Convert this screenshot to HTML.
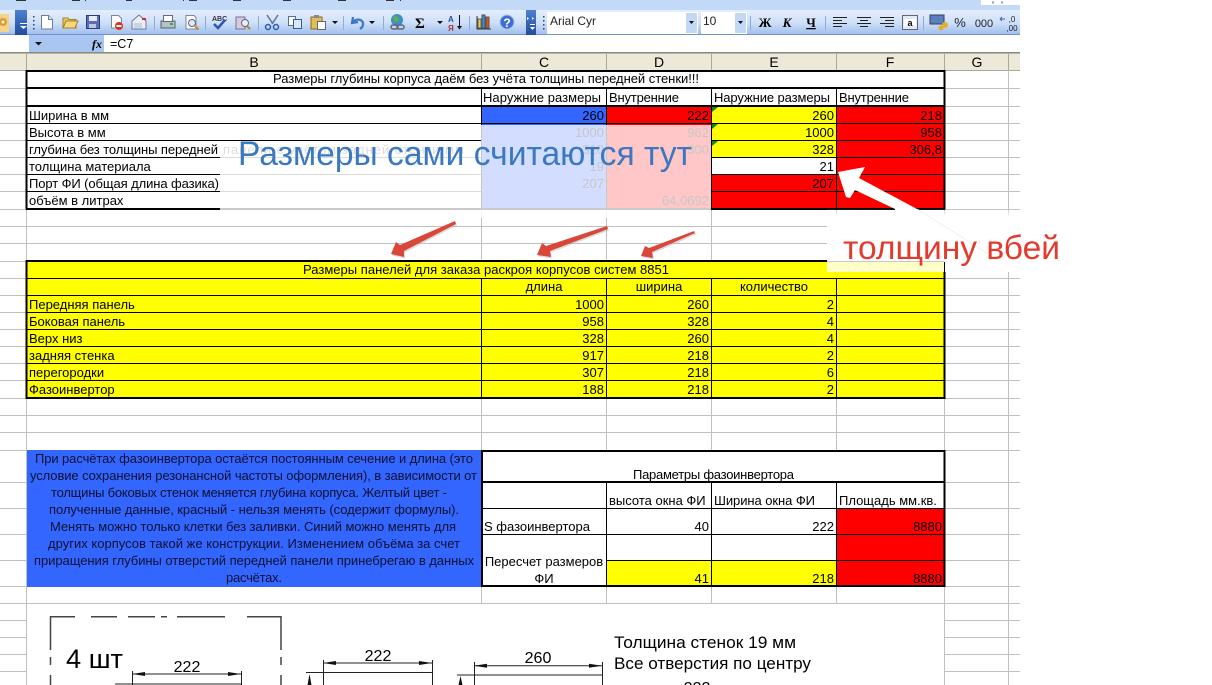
<!DOCTYPE html>
<html lang="ru"><head><meta charset="utf-8"><title>Excel</title>
<style>
html,body{margin:0;padding:0;background:#fff;width:1212px;height:685px;overflow:hidden}
svg{display:block;position:absolute;left:0;top:0}
text{font-family:"Liberation Sans",sans-serif;font-size:13px;fill:#000}
.r{text-anchor:end}.c{text-anchor:middle}
.g{stroke:#c0c0c0;stroke-width:1;shape-rendering:crispEdges}
.k{stroke:#000;stroke-width:1;shape-rendering:crispEdges}
.K{stroke:#000;stroke-width:2;shape-rendering:crispEdges}
.d{stroke:#222;stroke-width:1;fill:none}
.h{font-size:14px}
</style></head><body>
<svg width="1212" height="685" viewBox="0 0 1212 685" xmlns="http://www.w3.org/2000/svg">
<defs>
<linearGradient id="tb" x1="0" y1="0" x2="0" y2="1"><stop offset="0" stop-color="#e4eefc"/><stop offset=".5" stop-color="#cfe0f8"/><stop offset="1" stop-color="#9dbcec"/></linearGradient>
<linearGradient id="gr" x1="0" y1="0" x2="0" y2="1"><stop offset="0" stop-color="#4f7fd0"/><stop offset="1" stop-color="#1f4c9c"/></linearGradient>
<linearGradient id="fade" x1="0" y1="0" x2="0" y2="1"><stop offset="0" stop-color="#fff" stop-opacity="0"/><stop offset=".4" stop-color="#fff" stop-opacity="1"/></linearGradient>
<filter id="s" x="-20%" y="-20%" width="140%" height="140%"><feGaussianBlur stdDeviation=".35"/></filter>
</defs>

<!-- chrome -->
<rect x="0" y="0" width="1020" height="10" fill="#c3d9f8"/>
<rect x="981" y="0" width="39" height="5" fill="#fff"/>
<g stroke="#333" stroke-width="1" fill="none" shape-rendering="crispEdges">
<path d="M16 .5h10M72 .5h8M85 .5h1M126 .5h6M183 .5h1M189 .5h8M233 .5h8M283 .5h8M338 .5h8M386 .5h8M400 .5h1"/>
<path d="M993 1.500v2M1002 1.500v2"/>
</g>
<rect x="0" y="10" width="1020" height="25" fill="url(#tb)"/>
<rect x="0" y="34" width="1020" height="1" fill="#6f93d2"/>
<rect x="15" y="10" width="12" height="25" fill="url(#gr)"/>
<rect x="526" y="10" width="10" height="25" fill="url(#gr)"/>
<path d="M20 26h7l-3.500 3z M20 23h7v1h-7z M530 27h5l-2.500 3z M530 24h5v1h-5z" fill="#fff"/>
<path d="M527 17l2 1.500-2 1.500zM532 17l2 1.500-2 1.500z" fill="#fff"/>
<rect x="0" y="14" width="9" height="18" fill="#f2d38a"/>
<circle cx="3" cy="22" r="4" fill="#e39a2c"/><circle cx="3" cy="22" r="1.500" fill="#fff"/>
<path d="M33 16h1.500v1.500H33zM33 20h1.500v1.500H33zM33 24h1.500v1.500H33zM33 28h1.500v1.500H33z M543 16h1.500v1.500H543zM543 20h1.500v1.500H543zM543 24h1.500v1.500H543zM543 28h1.500v1.500H543z" fill="#224488"/>

<!-- icons -->
<path d="M41.500 15.500h7l4 4v9.500h-11z" fill="#fff" stroke="#6b7c99"/><path d="M48.500 15.500v4h4" fill="#dde6f3" stroke="#6b7c99"/>
<path d="M63 28v-10h5l1 1.500h7v8.500z" fill="#e8c760" stroke="#a5811f"/><path d="M63 28l3-7h12l-3 7z" fill="#f4d67c" stroke="#a5811f"/>
<rect x="86.500" y="15.500" width="13" height="13" fill="#5a6db9" stroke="#2b3a86"/><rect x="89" y="16" width="8" height="5" fill="#e9edf7"/><rect x="89" y="24" width="7" height="4" fill="#bcc6de"/>
<path d="M111.500 15.500h7l3 3v9.500h-10z" fill="#fff" stroke="#7a879e"/><circle cx="119" cy="26" r="4" fill="#d8321e"/><rect x="116.500" y="25" width="5" height="2" fill="#fff"/>
<path d="M132 21l7-6 7 6v8h-14z" fill="#e9edf4" stroke="#6b7c99"/><rect x="134" y="23" width="8" height="5" fill="#c8d3e6"/><rect x="142" y="18" width="4" height="2" fill="#d23"/>
<rect x="161" y="21" width="14" height="7" fill="#b8bfcc" stroke="#566"/><rect x="163.500" y="15.500" width="9" height="6" fill="#fff" stroke="#667"/><rect x="170" y="23" width="3" height="2" fill="#2fb04a"/>
<path d="M186 15.500h8l2 2v11.500h-10z" fill="#fff" stroke="#7a879e"/><circle cx="192" cy="23" r="3.500" fill="#dfeafa" stroke="#667"/><path d="M195 26l3.500 3.500" stroke="#c9882a" stroke-width="2"/>
<text x="212" y="21" style="font-size:7px;font-weight:bold;fill:#334">ABC</text><path d="M214 24l4 4 7-8" fill="none" stroke="#2a58b8" stroke-width="2.500"/>
<rect x="236" y="17" width="9" height="12" fill="#d8c9e0" stroke="#7d6f99"/><circle cx="245" cy="23" r="3.500" fill="#e5f0fb" stroke="#667"/><path d="M247 26l3 3" stroke="#b8861e" stroke-width="2"/>
<path d="M267 15l6 9M278 15l-6 9" stroke="#66738c" stroke-width="1.500"/><circle cx="268" cy="27" r="2.500" fill="none" stroke="#2e5db0" stroke-width="1.500"/><circle cx="276" cy="27" r="2.500" fill="none" stroke="#2e5db0" stroke-width="1.500"/>
<rect x="288.500" y="16.500" width="7" height="9" fill="#fff" stroke="#54709f"/><rect x="293.500" y="19.500" width="8" height="9" fill="#dce8f8" stroke="#2f5ea8"/>
<rect x="311" y="17" width="11" height="12" fill="#e3bd58" stroke="#8a6b1e"/><rect x="314" y="15" width="5" height="3" fill="#888"/><rect x="317.500" y="21.500" width="8" height="8" fill="#fff" stroke="#667"/>
<path d="M332 21h6l-3 3z M369 21h6l-3 3z M437 21h6l-3 3z" fill="#111"/>
<path d="M353 17l-1 6 6-1M353 22c3-4 11-3 10 3-.4 2-1.500 3-3 4" fill="none" stroke="#3f73c8" stroke-width="2.200"/>
<circle cx="397" cy="20" r="6" fill="#3f8fc8"/><path d="M393 17c3-2 5 0 6 2l-2 3-3-1z" fill="#5fb04a"/><rect x="391" y="25" width="7" height="4" rx="2" fill="none" stroke="#667" stroke-width="1.500"/><rect x="397" y="25" width="7" height="4" rx="2" fill="none" stroke="#667" stroke-width="1.500"/>
<text x="415" y="28" style="font-size:15px;font-weight:bold;font-family:'Liberation Serif',serif">Σ</text>
<text x="448" y="22" style="font-size:8px;font-weight:bold;fill:#2c4f9c">A</text><text x="448" y="31" style="font-size:8px;font-weight:bold;fill:#a33">Я</text><path d="M459.500 15v13" stroke="#111"/><path d="M457 26h5l-2.500 3.500z" fill="#111"/>
<rect x="478" y="19" width="3" height="9" fill="#e5cf50" stroke="#665"/><rect x="482" y="15" width="3" height="13" fill="#4a88cf" stroke="#456"/><rect x="486" y="17" width="3" height="11" fill="#d3522a" stroke="#654"/><path d="M477 16v13h14" fill="none" stroke="#333"/>
<circle cx="507" cy="22" r="7" fill="#3c6fd0" stroke="#a7c0ea"/><text x="507" y="27" class="c" style="font-size:12px;font-weight:bold;fill:#fff">?</text>
<g stroke="#8fabd8"><path d="M154.500 16v14M205.500 16v14M258.500 16v14M343.500 16v14M383.500 16v14M469.500 16v14M750.500 16v14M825.500 16v14M923.500 16v14"/></g>

<rect x="547" y="12" width="151" height="22" fill="#fff"/><rect x="686" y="13" width="11" height="20" fill="#c3d8f6"/>
<rect x="701" y="12" width="46" height="22" fill="#fff"/><rect x="735" y="13" width="11" height="20" fill="#c3d8f6"/>
<path d="M689 21h5l-2.500 3zM738 21h5l-2.500 3z" fill="#111"/>
<text x="550" y="25" style="font-size:12px;fill:#222">Arial Cyr</text><text x="703" y="25" style="font-size:12px;fill:#222">10</text>
<text x="765" y="27" class="c" style="font-size:13px;font-weight:bold;font-family:'Liberation Serif',serif">Ж</text>
<text x="787" y="27" class="c" style="font-size:13px;font-weight:bold;font-style:italic;font-family:'Liberation Serif',serif">К</text>
<text x="811" y="27" class="c" style="font-size:13px;font-weight:bold;font-family:'Liberation Serif',serif;text-decoration:underline">Ч</text>
<g stroke="#222" shape-rendering="crispEdges">
<path d="M833 17.500h14M833 20.500h9M833 23.500h14M833 26.500h9M857 17.500h14M860 20.500h8M857 23.500h14M860 26.500h8M880 17.500h14M885 20.500h9M880 23.500h14M885 26.500h9"/></g>
<rect x="902.500" y="15.500" width="15" height="14" fill="#e2eaf6" stroke="#667"/><rect x="904" y="19" width="12" height="7" fill="#fff"/><text x="910" y="26" class="c" style="font-size:9px;font-weight:bold">a</text>
<rect x="930" y="15" width="14" height="9" fill="#5a80c0" stroke="#345"/><circle cx="945" cy="25" r="3" fill="#e0b030"/><circle cx="941" cy="28" r="2.500" fill="#e0b030"/>
<text x="960" y="27" class="c" style="font-size:13px;fill:#223">%</text><text x="984" y="27" class="c" style="font-size:11px;fill:#223">000</text>
<text x="1012" y="22" class="c" style="font-size:8px;fill:#223">,0</text><text x="1012" y="31" class="c" style="font-size:8px;fill:#223">,00</text><path d="M1000 19h5M1000 19l2-2M1000 19l2 2" stroke="#3a6cc0" fill="none"/>

<!-- formula bar -->
<rect x="0" y="35" width="1020" height="17" fill="#fff"/>
<rect x="29" y="35" width="75" height="17" fill="#a9c5f2"/>
<path d="M35 42h7l-3.500 3.500z" fill="#111"/>
<text x="92" y="48" style="font-size:12px;font-style:italic;font-weight:bold;font-family:'Liberation Serif',serif">fx</text>
<text x="110" y="48" style="font-size:12.500px">=C7</text>

<!-- headers -->
<rect x="0" y="52" width="1020" height="18" fill="#ece9d8"/>
<rect x="0" y="52" width="1020" height="1" fill="#8a8a80"/>
<rect x="0" y="53" width="1020" height="1" fill="#b8b5a5"/>
<rect x="0" y="70" width="1020" height="1" fill="#aca899"/>
<g stroke="#aca899" shape-rendering="crispEdges"><path d="M26.500 54v16M481.500 54v16M606.500 54v16M711.500 54v16M836.500 54v16M944.500 54v16M1008.500 54v16"/></g>
<text x="254" y="67" class="c h">B</text><text x="544" y="67" class="c h">C</text><text x="659" y="67" class="c h">D</text><text x="774" y="67" class="c h">E</text><text x="890" y="67" class="c h">F</text><text x="977" y="67" class="c h">G</text>

<!-- grid -->
<g class="g">
<path d="M0 88.500H1020M0 106.500H1020M0 123.500H1020M0 140.500H1020M0 157.500H1020M0 174.500H1020M0 191.500H1020M0 209.500H1020M0 226.500H1020M0 243.500H1020M0 261.500H1020M0 278.500H1020M0 295.500H1020M0 312.500H1020M0 329.500H1020M0 346.500H1020M0 363.500H1020M0 380.500H1020M0 398.500H1020M0 415.500H1020M0 432.500H1020M0 450.500H1020M0 482.500H1020M0 508.500H1020M0 534.500H1020M0 560.500H1020M0 586.500H1020M0 603.500H1020M0 620.500H1020M0 637.500H1020M0 654.500H1020M0 671.500H1020"/>
<path d="M26.500 70V685M481.500 70V603M606.500 70V603M711.500 70V603M836.500 70V603M944.500 70V685M1008.500 70V685"/>
</g>
<rect x="27" y="604" width="917" height="81" fill="#fff"/>

<!-- table 1 -->
<rect x="27" y="70" width="917" height="139" fill="#fff"/>
<rect x="481" y="106" width="125" height="18" fill="#3366ff"/>
<rect x="606" y="106" width="105" height="18" fill="#ff0000"/>
<rect x="711" y="106" width="125" height="51" fill="#ffff00"/>
<rect x="836" y="106" width="108" height="103" fill="#ff0000"/>
<rect x="711" y="174" width="125" height="35" fill="#ff0000"/>
<rect x="481" y="124" width="125" height="85" fill="#3366ff"/>
<rect x="606" y="124" width="105" height="85" fill="#ff0000"/>
<path d="M712 107h6l-6 5zM712 124h6l-6 5zM712 141h6l-6 5z" fill="#0a8a20"/>
<g class="k"><path d="M27 123.500H944M27 140.500H481M711 140.500H944M27 157.500H481M711 157.500H944M27 174.500H481M711 174.500H944M27 191.500H481M711 191.500H944"/>
<path d="M481.500 88V209M606.500 88V209M711.500 88V209M836.500 88V209"/></g>
<g class="K"><path d="M26 71H945M26 88H945M26 106H945M26 209H945M26.500 70V209.500M944.500 70V209.500"/></g>

<text x="486" y="83" class="c" textLength="426" lengthAdjust="spacing">Размеры глубины корпуса даём без учёта толщины передней стенки!!!</text>
<text x="483" y="102" textLength="118">Наружние размеры</text><text x="609" y="102" textLength="70">Внутренние</text><text x="714" y="102" textLength="116">Наружние размеры</text><text x="839" y="102" textLength="70">Внутренние</text>
<text x="29" y="120">Ширина в мм</text><text x="29" y="137">Высота в мм</text><text x="29" y="154" textLength="189">глубина без толщины передней</text><text x="223" y="154" textLength="241">панели с учётом задней стенки мм</text><text x="29" y="171">толщина материала</text><text x="29" y="188" textLength="190">Порт ФИ (общая длина фазика)</text><text x="29" y="205">объём в литрах</text>
<text x="604" y="120" class="r">260</text><text x="709" y="120" class="r">222</text><text x="834" y="120" class="r">260</text><text x="942" y="120" class="r">218</text>
<text x="604" y="137" class="r">1000</text><text x="709" y="137" class="r">962</text><text x="834" y="137" class="r">1000</text><text x="942" y="137" class="r">958</text>
<text x="604" y="154" class="r">310</text><text x="709" y="154" class="r">300</text><text x="834" y="154" class="r">328</text><text x="942" y="154" class="r">306,8</text>
<text x="604" y="171" class="r">19</text><text x="834" y="171" class="r">21</text>
<text x="604" y="188" class="r">207</text><text x="834" y="188" class="r">207</text>
<text x="709" y="205" class="r">64,0692</text>

<!-- overlay -->
<rect x="220" y="141" width="261" height="68" fill="#fff" fill-opacity=".86"/>
<rect x="481" y="125" width="230" height="84" fill="#fff" fill-opacity=".78"/>
<rect x="220" y="208" width="491" height="2" fill="#cacaca"/>
<rect x="220" y="210" width="491" height="8" fill="#fff" fill-opacity=".8"/>
<text x="238" y="165" style="font-size:34px;fill:#3a78c0" textLength="454" lengthAdjust="spacingAndGlyphs">Размеры сами считаются тут</text>

<!-- table 2 -->
<rect x="27" y="261" width="917" height="137" fill="#ffff00"/>
<g class="k"><path d="M27 278.500H944M27 295.500H944M27 312.500H944M27 329.500H944M27 346.500H944M27 363.500H944M27 380.500H944"/>
<path d="M481.500 278V398M606.500 278V398M711.500 278V398M836.500 278V398"/></g>
<g class="K"><path d="M26 261H945M26 398H945M26.500 260V399M944.500 260V399"/></g>
<text x="486" y="274" class="c" textLength="366" lengthAdjust="spacing">Размеры панелей для заказа раскроя корпусов систем 8851</text>
<text x="544" y="291" class="c">длина</text><text x="659" y="291" class="c">ширина</text><text x="774" y="291" class="c">количество</text>
<text x="29" y="309">Передняя панель</text><text x="604" y="309" class="r">1000</text><text x="709" y="309" class="r">260</text><text x="834" y="309" class="r">2</text>
<text x="29" y="326">Боковая панель</text><text x="604" y="326" class="r">958</text><text x="709" y="326" class="r">328</text><text x="834" y="326" class="r">4</text>
<text x="29" y="343">Верх низ</text><text x="604" y="343" class="r">328</text><text x="709" y="343" class="r">260</text><text x="834" y="343" class="r">4</text>
<text x="29" y="360">задняя стенка</text><text x="604" y="360" class="r">917</text><text x="709" y="360" class="r">218</text><text x="834" y="360" class="r">2</text>
<text x="29" y="377">перегородки</text><text x="604" y="377" class="r">307</text><text x="709" y="377" class="r">218</text><text x="834" y="377" class="r">6</text>
<text x="29" y="394">Фазоинвертор</text><text x="604" y="394" class="r">188</text><text x="709" y="394" class="r">218</text><text x="834" y="394" class="r">2</text>

<!-- white arrow + label -->
<rect x="827" y="209" width="193" height="18" fill="url(#fade)"/>
<rect x="827" y="216" width="193" height="46" fill="#fff"/>
<rect x="827" y="262" width="117" height="10" fill="#ffffc8"/>
<rect x="827" y="261" width="117" height="1" fill="#c8c8c8"/>
<rect x="945" y="216" width="75" height="56" fill="#fff"/>
<path d="M838 172L865 167 859 178 917 209 917 222 895 222 895 209 855 190 850 198 846 197Z" fill="#fff"/>
<path d="M917 209L990 255" stroke="#eeeeee" stroke-width="1"/>
<text x="843" y="259" style="font-size:33px;fill:#e5392b" textLength="217" lengthAdjust="spacingAndGlyphs">толщину вбей</text>

<!-- red arrows -->
<g fill="#bbb" opacity=".5" transform="translate(1 1.500)" filter="url(#s)">
<path d="M391 254L396 242 400 245 455 221 456 224 404 251 404 257Z"/>
<path d="M537 255L542 243 546 246 607 226 608 229 550 251 551 257Z"/>
<path d="M641 256L645 246 649 248 694 231 695 233 652 252 653 258Z"/>
</g>
<g fill="#d9473a" filter="url(#s)">
<path d="M391 254L396 242 400 245 455 221 456 224 404 251 404 257Z"/>
<path d="M537 255L542 243 546 246 607 226 608 229 550 251 551 257Z"/>
<path d="M641 256L645 246 649 248 694 231 695 233 652 252 653 258Z"/>
</g>

<!-- table 3 and note -->
<rect x="27" y="450" width="454" height="137" fill="#3366ff"/>
<g style="fill:#101030">
<text x="35" y="463" textLength="438" style="fill:#101030">При расчётах фазоинвертора остаётся постоянным сечение и длина (это</text>
<text x="30" y="480" textLength="447" style="fill:#101030">условие сохранения резонансной частоты оформления), в зависимости от</text>
<text x="51" y="497" textLength="396" style="fill:#101030">толщины боковых стенок меняется глубина корпуса. Желтый цвет -</text>
<text x="49" y="514" textLength="410" style="fill:#101030">полученные данные, красный - нельзя менять (содержит формулы).</text>
<text x="50" y="531" textLength="406" style="fill:#101030">Менять можно только клетки без заливки. Синий можно менять для</text>
<text x="48" y="548" textLength="412" style="fill:#101030">других корпусов такой же конструкции. Изменением объёма за счет</text>
<text x="34" y="565" textLength="440" style="fill:#101030">приращения глубины отверстий передней панели принебрегаю в данных</text>
<text x="226" y="582" textLength="56" style="fill:#101030">расчётах.</text>
</g>
<rect x="481" y="450" width="463" height="137" fill="#fff"/>
<rect x="836" y="508" width="108" height="78" fill="#ff0000"/>
<rect x="606" y="560" width="230" height="26" fill="#ffff00"/>
<g class="k"><path d="M481 508.500H944M481 534.500H944M606 560.500H944M606.500 482V586M711.500 482V586M836.500 482V586"/></g>
<g class="K"><path d="M481 451H945M481 482H945M481 586H945M482 450V587M944.500 450V587"/></g>
<text x="633" y="479" textLength="161">Параметры фазоинвертора</text>
<text x="609" y="505">высота окна ФИ</text><text x="714" y="505" textLength="101">Ширина окна ФИ</text><text x="839" y="505">Площадь мм.кв.</text>
<text x="484" y="531">S фазоинвертора</text><text x="709" y="531" class="r">40</text><text x="834" y="531" class="r">222</text><text x="942" y="531" class="r">8880</text>
<text x="544" y="566" class="c">Пересчет размеров</text><text x="544" y="583" class="c">ФИ</text><text x="709" y="583" class="r">41</text><text x="834" y="583" class="r">218</text><text x="942" y="583" class="r">8880</text>

<!-- drawing -->
<g stroke="#444" stroke-width="1.500" fill="none">
<path d="M50.500 650V616.700H75M91 616.700H117M128 616.700H155M161 616.700H167M177 616.700H225M247 616.700H281V650M50.500 657V665M50.500 675V685M281 657V665M281 675V685"/>
</g>
<text x="66" y="668" style="font-size:27px" textLength="57" lengthAdjust="spacingAndGlyphs">4 шт</text>
<text x="187" y="672" class="c" style="font-size:16px">222</text>
<text x="378" y="661" class="c" style="font-size:16px">222</text>
<text x="538" y="663" class="c" style="font-size:16px">260</text>
<g class="d">
<path d="M132.500 671V685M241.500 671V685M132 674H241M115 684H241"/>
<path d="M323.500 660V685M432.500 660V685M323 663H432M306 672.500H432"/>
<path d="M474.500 662V685M602.500 662V685M474 665.700H602M457 675H602"/>
</g>
<path d="M132 674l13-2v4zM241 674l-13-2v4zM323 663l13-2v4zM432 663l-13-2v4zM474 665.700l13-2v4zM602 665.700l-13-2v4zM309.500 674l-2 11h4zM460.500 676l-2 9h4z" fill="#111"/>
<text x="614" y="648" style="font-size:17px" textLength="182" lengthAdjust="spacingAndGlyphs">Толщина стенок 19 мм</text>
<text x="614" y="669" style="font-size:17px" textLength="197" lengthAdjust="spacingAndGlyphs">Все отверстия по центру</text>
<text x="697" y="693" class="c" style="font-size:16px">222</text>
</svg>
</body></html>
